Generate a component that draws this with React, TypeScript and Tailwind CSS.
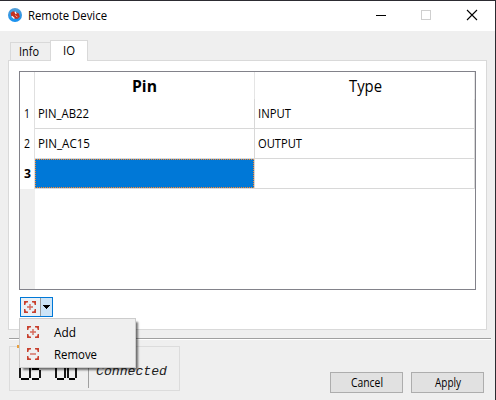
import React from "react";

const uiFont = "font-['Open_Sans','Noto_Sans',sans-serif]";

function Label({ children, width, className = "" }: { children: string; width: number; className?: string }) {
  return (
    <svg width={width} height="18" className={`block shrink-0 overflow-visible ${className}`}>
      <text x="0" y="13" textLength={width} lengthAdjust="spacingAndGlyphs" fill="currentColor">
        {children}
      </text>
    </svg>
  );
}

function FocusIcon({ plus }: { plus: boolean }) {
  return (
    <svg width="12" height="12" viewBox="0 0 12 12" className="block shrink-0">
      <path d="M0 4V0H4V1.4L2.6 1.6L1.6 2.6L1.4 4ZM8 0H12V4H10.6L10.4 2.6L9.4 1.6L8 1.4ZM0 8V12H4V10.6L2.6 10.4L1.6 9.4L1.4 8ZM8 12H12V8H10.6L10.4 9.4L9.4 10.4L8 10.6Z" fill="#c8412f" />
      <path d={plus ? "M3 5.3H5.3V3H6.7V5.3H9V6.7H6.7V9H5.3V6.7H3Z" : "M3 5.3H9V6.7H3Z"} fill="#d4695b" />
    </svg>
  );
}

function AppIcon() {
  return (
    <svg width="14" height="14" viewBox="0 0 14 14" className="block shrink-0">
      <defs>
        <linearGradient id="ball" x1="0" y1="0" x2="0" y2="1">
          <stop offset="0" stopColor="#559fd6" />
          <stop offset="1" stopColor="#1590f0" />
        </linearGradient>
      </defs>
      <circle cx="7" cy="7" r="7" fill="url(#ball)" />
      <path d="M2.6 5L5 3.2L8 4.2L10.8 5.6L11.8 8.8L9.8 10.8L6.8 10.8L3.4 8.3Z" fill="#c5301f" />
      <path d="M7 3.8L8.2 6M3.8 8.2L6.4 10.4" stroke="#fff" strokeWidth="1.3" />
      <path d="M7.6 7.4L9.4 9.2" stroke="#f0c0ba" />
    </svg>
  );
}

function TableRow({ n, pin, type, pinWidth, typeWidth }: { n: string; pin: string; type: string; pinWidth: number; typeWidth: number }) {
  return (
    <div className="flex h-[30px]">
      <div className="w-[15px] shrink-0 border-r border-[#e0e0e0] pl-1 pt-[6px]"><Label width={6}>{n}</Label></div>
      <div className="w-[220px] shrink-0 border-b border-r border-[#d8d8d8] pl-[3px] pt-[6px]"><Label width={pinWidth}>{pin}</Label></div>
      <div className="w-[220px] shrink-0 border-b border-r border-[#d8d8d8] pl-[3px] pt-[6px]"><Label width={typeWidth}>{type}</Label></div>
    </div>
  );
}

export default function App() {
  return (
    <div className={`relative h-[400px] w-[496px] overflow-hidden border-r border-t border-[#2c2b31] bg-[#efefef] text-[12px] text-black ${uiFont}`}>
      <header className="flex h-[30px] items-start bg-white pl-2">
        <div className="pt-[7px]"><AppIcon /></div>
        <Label width={79} className="ml-[6px] mt-[6px]">Remote Device</Label>
        <svg width="102" height="12" viewBox="0 0 102 12" className="ml-[269px] mt-2 shrink-0">
          <path d="M0 6.5H10" stroke="#000" />
          <rect x="45.5" y="1.5" width="9" height="9" fill="none" stroke="#cfcfcf" />
          <path d="M91 1L101 11M101 1L91 11" stroke="#000" strokeWidth="1.1" />
        </svg>
      </header>
      <nav className="flex h-[29px] items-end pl-[10px]">
        <div className="h-[18px] w-[40px] border-l border-t border-[#d9d9d9] pl-2"><Label width={20}>Info</Label></div>
        <div className="relative z-10 -mb-px h-[21px] w-[38px] border-x border-t border-[#d9d9d9] bg-white pl-3 pt-px"><Label width={12}>IO</Label></div>
      </nav>
      <main className="ml-2 h-[270px] w-[479px] border border-[#d9d9d9] bg-white pl-[10px] pt-[10px]">
        <section className="h-[219px] w-[457px] border border-[#82828a] bg-white">
          <div className="flex h-[27px]">
            <div className="w-[15px] border-r border-[#e0e0e0]" />
            <div className="flex w-[220px] justify-center border-r border-[#e5e5e5] pt-[7px] text-[15.5px] font-bold"><Label width={25}>Pin</Label></div>
            <div className="flex w-[220px] justify-center border-r border-[#e5e5e5] pl-[2px] pt-[7px] text-[15.5px]"><Label width={33}>Type</Label></div>
          </div>
          <TableRow n="1" pin="PIN_AB22" type="INPUT" pinWidth={51} typeWidth={33} />
          <TableRow n="2" pin="PIN_AC15" type="OUTPUT" pinWidth={52} typeWidth={44} />
          <div className="flex h-[30px]">
            <div className="w-[15px] border-r border-[#e0e0e0] pl-1 pt-[6px] font-bold"><Label width={7}>3</Label></div>
            <div className="w-[220px] border-b border-r border-[#d8d8d8]">
              <svg width="219" height="29" className="block">
                <rect width="219" height="29" fill="#0078d7" />
                <path d="M0 .5H219M0 28.5H219M.5 0V29M218.5 0V29" stroke="#ff8728" strokeWidth="1" strokeDasharray="1 1" />
              </svg>
            </div>
            <div className="w-[220px] border-b border-r border-[#d8d8d8]" />
          </div>
          <div className="h-[100px] w-[15px] bg-[#efefef]" />
        </section>
        <div className="ml-px mt-[7px] flex h-[20px] w-[33px] border border-[#0078d7] bg-[#e5f1fb]">
          <div className="flex w-[19px] items-center justify-center bg-[#e9f1f7] pr-px"><FocusIcon plus /></div>
          <div className="flex w-[12px] items-center justify-center border-l border-[#999] bg-[#cce4f7]">
            <svg width="7" height="4" shapeRendering="crispEdges"><path d="M0 0H7L3.5 4Z" /></svg>
          </div>
        </div>
      </main>
      <div className="ml-[9px] mt-[8px] h-[2px] w-[482px] border-b border-t border-b-white border-t-[#a0a0a0]" />
      <footer className="flex">
        <div className="ml-[9px] mt-[6px] flex h-[45px] w-[171px] border border-[#dcdcdc]">
          <svg width="78" height="40" viewBox="10 347 78 40" className="shrink-0 overflow-visible">
            <path d="M17 345H19V348H17Z" fill="#e8a040" />
            <path d="M20 368V378M30 368V378M21 379H29M32 369H39M40 370V378M32 379H39M56 368V378M65 368V378M57 379H64M68 368V378M76 368V378M69 379H75" fill="none" stroke="#000" strokeWidth="1.8" />
          </svg>
          <div className="mt-[3px] h-[38px] w-px bg-[#a0a0a0]" />
          <div className="ml-[7px] mt-[15px] font-['Liberation_Mono',monospace] text-[12.5px] italic text-[#222]"><Label width={71}>Connected</Label></div>
        </div>
        <div className="ml-[150px] mt-[32px] flex h-[21px] w-[73px] justify-center border border-[#adadad] bg-[#e1e1e1] pt-px"><Label width={32}>Cancel</Label></div>
        <div className="ml-2 mt-[32px] flex h-[21px] w-[73px] justify-center border border-[#adadad] bg-[#e1e1e1] pt-px"><Label width={26}>Apply</Label></div>
      </footer>
      <div className="absolute left-[19px] top-[317px] flex h-[50px] w-[117px] flex-col border border-[#cccccc] bg-[#efefef] pl-[7px] pt-[5px] shadow-[3px_3px_2px_-1px_rgba(0,0,0,0.55)]">
        <div className="flex h-[22px] items-start"><div className="pt-[2px]"><FocusIcon plus /></div><Label width={22} className="ml-[15px]">Add</Label></div>
        <div className="flex h-[22px] items-start"><div className="pt-[2px]"><FocusIcon plus={false} /></div><Label width={43} className="ml-[15px]">Remove</Label></div>
      </div>
    </div>
  );
}
